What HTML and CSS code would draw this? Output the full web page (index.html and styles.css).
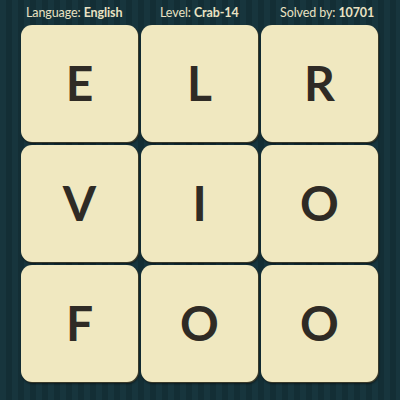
FILE: index.html
```html
<!DOCTYPE html>
<html>
<head>
<meta charset="utf-8">
<link rel="stylesheet" href="styles.css">
</head>
<body>
<div class="page">
  <div class="header">
    <div class="stat stat-lang">Language: <b>English</b></div>
    <div class="stat stat-level">Level: <b>Crab-14</b></div>
    <div class="stat stat-solved">Solved by: <b>10701</b></div>
  </div>
  <div class="board">
    <div class="tile"><span>E</span></div>
    <div class="tile"><span>L</span></div>
    <div class="tile"><span>R</span></div>
    <div class="tile"><span>V</span></div>
    <div class="tile"><span>I</span></div>
    <div class="tile"><span>O</span></div>
    <div class="tile"><span>F</span></div>
    <div class="tile"><span>O</span></div>
    <div class="tile"><span>O</span></div>
  </div>
</div>
</body>
</html>
```
FILE: styles.css
```css
html, body {
  margin: 0;
  padding: 0;
}
body {
  width: 400px;
  height: 400px;
  overflow: hidden;
  background-color: #153139;
  background-image: repeating-linear-gradient(90deg, #17353d 0px, #17353d 6px, #132e35 6px, #132e35 12px);
  font-family: "Lato", "Open Sans", sans-serif;
}
.page {
  display: flex;
  flex-direction: column;
}
.header {
  height: 25px;
  display: flex;
  align-items: center;
  color: #e9e2c3;
  font-size: 12.5px;
  letter-spacing: -0.1px;
  padding: 0 0 1px 26px;
  box-sizing: border-box;
}
.header b {
  font-weight: 700;
}
.stat-lang { width: 134px; }
.stat-level { width: 120px; }
.board {
  margin-left: 21px;
  display: grid;
  grid-template-columns: repeat(3, 117px);
  grid-auto-rows: 117px;
  gap: 3px;
}
.tile {
  background: #f0e8c0;
  border-radius: 11px;
  box-shadow: 1px 1px 0 #3a3a2a, 1px 2px 2px rgba(0,0,0,0.45);
  display: flex;
  align-items: center;
  justify-content: center;
  color: #2f2b25;
  font-size: 48px;
  font-weight: 700;
  padding-bottom: 3px;
  box-sizing: border-box;
}
```
